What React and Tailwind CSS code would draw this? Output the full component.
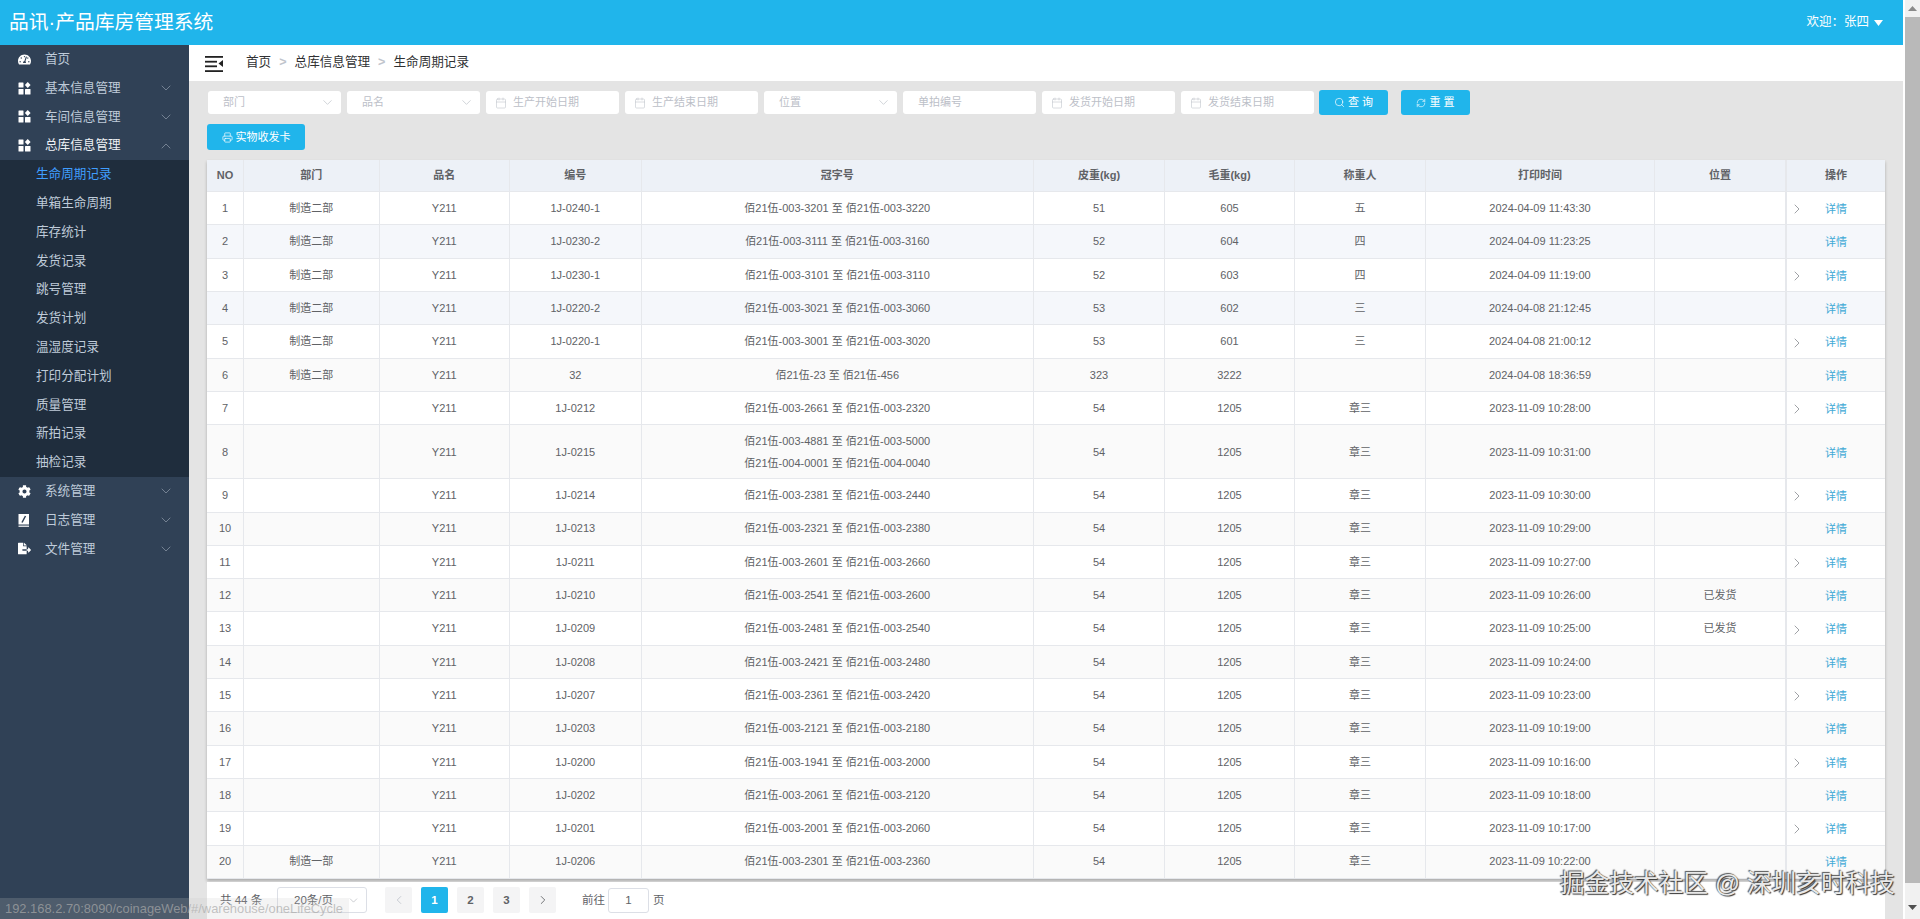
import React from "react";
import { FaTachometerAlt, FaCog, FaFileExport } from "react-icons/fa";
import { ChevronDown, ChevronUp, ChevronRight, ChevronLeft, Calendar, Search, RefreshCw, Printer } from "lucide-react";

const font = "font-['Liberation_Sans','Noto_Sans_CJK_SC',sans-serif]";

function Grid4() {
  return (
    <svg width="13" height="13" viewBox="0 0 13 13" fill="#fff">
      <rect x="0.5" y="0.5" width="5" height="5" rx="0.5" />
      <rect x="0.5" y="7" width="5" height="5.5" rx="0.5" />
      <rect x="7" y="7" width="5.5" height="5.5" rx="0.5" />
      <path d="M9.7 0 L12.6 3 L9.7 6 L6.9 3 Z" />
    </svg>
  );
}
function NoteIcon() {
  return (
    <svg width="13" height="13" viewBox="0 0 13 13">
      <rect x="0.5" y="0" width="10.5" height="10.5" fill="#fff" />
      <path d="M7.5 2 L4 8.5" stroke="#304156" strokeWidth="1.5" />
      <rect x="0.5" y="11.6" width="10.5" height="1.2" fill="#fff" />
    </svg>
  );
}

const menuTop = [
  { t: "基本信息管理", i: <Grid4 /> },
  { t: "车间信息管理", i: <Grid4 /> },
];
const subs = ["生命周期记录", "单箱生命周期", "库存统计", "发货记录", "跳号管理", "发货计划", "温湿度记录", "打印分配计划", "质量管理", "新拍记录", "抽检记录"];
const menuBottom = [
  { t: "系统管理", i: <FaCog size={13} color="#fff" /> },
  { t: "日志管理", i: <NoteIcon /> },
  { t: "文件管理", i: <FaFileExport size={13} color="#fff" /> },
];

function MenuRow({ icon, text, open, arrow = true, light }) {
  return (
    <div className={`h-[28.8px] flex items-center pl-[18px] pr-[15px] text-[12.6px] ${light ? "text-[#eef1f5]" : "text-[#bfcbd9]"}`}>
      <span className="w-[13px] flex justify-center">{icon}</span>
      <span className="ml-[14px] flex-1">{text}</span>
      {arrow && (open ? <ChevronUp size={16} strokeWidth={1.1} className="text-[#8d99a9]" /> : <ChevronDown size={16} strokeWidth={1.1} className="text-[#8d99a9]" />)}
    </div>
  );
}

function Sidebar() {
  return (
    <aside className="w-[189px] shrink-0 bg-[#304156] h-full">
      <MenuRow icon={<FaTachometerAlt size={13} color="#fff" />} text="首页" arrow={false} />
      {menuTop.map((m) => <MenuRow key={m.t} icon={m.i} text={m.t} />)}
      <MenuRow icon={<Grid4 />} text="总库信息管理" open light />
      <div className="bg-[#1f2d3d]">
        {subs.map((s, i) => (
          <div key={s} className={`h-[28.8px] flex items-center pl-[36px] text-[12.6px] ${i === 0 ? "text-[#409eff]" : "text-[#bfcbd9]"}`}>{s}</div>
        ))}
      </div>
      {menuBottom.map((m) => <MenuRow key={m.t} icon={m.i} text={m.t} />)}
    </aside>
  );
}

function Sel({ w, text }) {
  return (
    <div className={`${w} h-[23px] bg-white rounded-[3px] flex items-center justify-between pl-[15px] pr-[6px] text-[11px] text-[#bcc0c8]`}>
      <span>{text}</span>
      <ChevronDown size={15} strokeWidth={1.1} />
    </div>
  );
}
function DateBox({ text }) {
  return (
    <div className="w-[133px] h-[23px] bg-white rounded-[3px] flex items-center pl-[9px] text-[11px] text-[#bcc0c8]">
      <Calendar size={12} strokeWidth={1.1} />
      <span className="ml-[6px]">{text}</span>
    </div>
  );
}
function Btn({ icon, text, cls }) {
  return (
    <button className={`h-[25px] bg-[#20b5eb] rounded-[3px] text-white text-[11px] flex items-center justify-center gap-[3px] ${cls}`}>
      {icon}<span>{text}</span>
    </button>
  );
}

const r = (a, b) => `佰21伍-003-${a} 至 佰21伍-003-${b}`;
const rows = [
  ["制造二部", "1J-0240-1", r(3201, 3220), 51, 605, "五", "2024-04-09 11:43:30", ""],
  ["制造二部", "1J-0230-2", r(3111, 3160), 52, 604, "四", "2024-04-09 11:23:25", ""],
  ["制造二部", "1J-0230-1", r(3101, 3110), 52, 603, "四", "2024-04-09 11:19:00", ""],
  ["制造二部", "1J-0220-2", r(3021, 3060), 53, 602, "三", "2024-04-08 21:12:45", ""],
  ["制造二部", "1J-0220-1", r(3001, 3020), 53, 601, "三", "2024-04-08 21:00:12", ""],
  ["制造二部", "32", "佰21伍-23 至 佰21伍-456", 323, 3222, "", "2024-04-08 18:36:59", ""],
  ["", "1J-0212", r(2661, 2320), 54, 1205, "章三", "2023-11-09 10:28:00", ""],
  ["", "1J-0215", [r(4881, 5000), "佰21伍-004-0001 至 佰21伍-004-0040"], 54, 1205, "章三", "2023-11-09 10:31:00", ""],
  ["", "1J-0214", r(2381, 2440), 54, 1205, "章三", "2023-11-09 10:30:00", ""],
  ["", "1J-0213", r(2321, 2380), 54, 1205, "章三", "2023-11-09 10:29:00", ""],
  ["", "1J-0211", r(2601, 2660), 54, 1205, "章三", "2023-11-09 10:27:00", ""],
  ["", "1J-0210", r(2541, 2600), 54, 1205, "章三", "2023-11-09 10:26:00", "已发货"],
  ["", "1J-0209", r(2481, 2540), 54, 1205, "章三", "2023-11-09 10:25:00", "已发货"],
  ["", "1J-0208", r(2421, 2480), 54, 1205, "章三", "2023-11-09 10:24:00", ""],
  ["", "1J-0207", r(2361, 2420), 54, 1205, "章三", "2023-11-09 10:23:00", ""],
  ["", "1J-0203", r(2121, 2180), 54, 1205, "章三", "2023-11-09 10:19:00", ""],
  ["", "1J-0200", r(1941, 2000), 54, 1205, "章三", "2023-11-09 10:16:00", ""],
  ["", "1J-0202", r(2061, 2120), 54, 1205, "章三", "2023-11-09 10:18:00", ""],
  ["", "1J-0201", r(2001, 2060), 54, 1205, "章三", "2023-11-09 10:17:00", ""],
  ["制造一部", "1J-0206", r(2301, 2360), 54, 1205, "章三", "2023-11-09 10:22:00", ""],
];
const heads = ["NO", "部门", "品名", "编号", "冠字号", "皮重(kg)", "毛重(kg)", "称重人", "打印时间", "位置", "操作"];
const widths = ["w-[36.5px]", "w-[135.5px]", "w-[130.5px]", "w-[131.5px]", "w-[392.5px]", "w-[131px]", "w-[130px]", "w-[131px]", "w-[229px]", "w-[131.5px]", "w-[99px]"];

function DataTable() {
  const td = "border-r border-b border-[#e6e8ec] text-center p-0";
  return (
    <table className="w-[1678px] table-fixed border-collapse bg-white text-[11px] text-[#606266] shadow-[0_2px_3px_rgba(0,0,0,0.25)]">
      <colgroup>{widths.map((w, i) => <col key={i} className={w} />)}</colgroup>
      <thead>
        <tr className="h-[31.7px] bg-[#edf1f7]">
          {heads.map((h, i) => (
            <th key={h} className={`${td} font-bold text-[#606266] ${i === 9 ? "border-r-2" : ""} ${i === 10 ? "border-r-0" : ""}`}>{h}</th>
          ))}
        </tr>
      </thead>
      <tbody>
        {rows.map((d, i) => {
          const bg = i % 2 === 0 ? "bg-white" : i < 4 ? "bg-[#f5f7fb]" : "bg-[#fafafa]";
          return (
            <tr key={i} className={`${i === 7 ? "h-[54px]" : "h-[33.3px]"} ${bg}`}>
              <td className={td}>{i + 1}</td>
              <td className={td}>{d[0]}</td>
              <td className={td}>Y211</td>
              <td className={td}>{d[1]}</td>
              <td className={td}>
                {Array.isArray(d[2])
                  ? d[2].map((x) => <div key={x} className="leading-[22px]">{x}</div>)
                  : d[2]}
              </td>
              <td className={td}>{d[3]}</td>
              <td className={td}>{d[4]}</td>
              <td className={td}>{d[5]}</td>
              <td className={td}>{d[6]}</td>
              <td className={`${td} border-r-2`}>{d[7]}</td>
              <td className={`${td} border-r-0 relative`}>
                {i % 2 === 0 && <ChevronRight size={16} strokeWidth={1} className="absolute left-[1.5px] top-1/2 -translate-y-[7px] text-[#6f7379]" />}
                <span className="text-[#3fa9d6] relative top-[1px]">详情</span>
              </td>
            </tr>
          );
        })}
      </tbody>
    </table>
  );
}

function PageBtn({ children, active, disabled }) {
  return (
    <div className={`w-[27px] h-[26px] rounded-[2px] flex items-center justify-center text-[11.5px] font-bold ${active ? "bg-[#20b5eb] text-white" : "bg-[#f4f4f5] text-[#606266]"} ${disabled ? "text-[#c0c4cc]" : ""}`}>
      {children}
    </div>
  );
}

export default function App() {
  return (
    <div className={`${font} w-[1920px] h-[919px] overflow-hidden flex relative bg-white`}>
      <div className="w-[1905px] h-full flex flex-col">
        <header className="h-[45px] shrink-0 w-[1903px] bg-[#20b5eb] flex items-center justify-between pl-[9px] pr-[20px] text-white">
          <span className="text-[19.8px]">品讯·产品库房管理系统</span>
          <span className="flex items-center gap-[5px] text-[12.5px]">
            欢迎：张四
            <svg width="9" height="6" viewBox="0 0 9 6" fill="#fff"><path d="M0 0 H9 L4.5 6 Z" /></svg>
          </span>
        </header>
        <div className="flex-1 flex min-h-0">
          <Sidebar />
          <main className="w-[1714px] flex flex-col min-h-0">
            <div className="h-[36px] shrink-0 bg-white flex items-center pl-[16px] pb-[2px] text-[12.6px] text-[#303133]">
              <svg width="18" height="16" viewBox="0 0 18 16" fill="#222" className="mr-[23px] mt-[3px]">
                <rect x="0" y="0" width="18" height="1.8" />
                <rect x="0" y="4.8" width="12" height="1.8" />
                <rect x="0" y="9.4" width="12" height="1.8" />
                <rect x="0" y="14.2" width="18" height="1.8" />
                <path d="M18 4 V11 L13.5 7.5 Z" />
              </svg>
              <span>首页</span>
              <span className="mx-[8px] text-[#c0c4cc] font-bold">&gt;</span>
              <span>总库信息管理</span>
              <span className="mx-[8px] text-[#c0c4cc] font-bold">&gt;</span>
              <span>生命周期记录</span>
            </div>
            <div className="flex-1 bg-[#e4e4e4] pl-[18px] pt-[9px] min-h-0 flex flex-col">
              <div className="flex items-center h-[25px] ml-[1px]">
                <div className="flex gap-[6px]">
                  <Sel w="w-[133px]" text="部门" />
                  <Sel w="w-[133px]" text="品名" />
                  <DateBox text="生产开始日期" />
                  <DateBox text="生产结束日期" />
                  <Sel w="w-[133px]" text="位置" />
                  <div className="w-[133px] h-[23px] bg-white rounded-[3px] flex items-center pl-[15px] text-[11px] text-[#bcc0c8]">单拍编号</div>
                  <DateBox text="发货开始日期" />
                  <DateBox text="发货结束日期" />
                </div>
                <Btn cls="w-[69px] ml-[5px]" icon={<Search size={11} strokeWidth={1.5} />} text="查 询" />
                <Btn cls="w-[69px] ml-[13px]" icon={<RefreshCw size={10} strokeWidth={1.5} />} text="重 置" />
              </div>
              <Btn cls="w-[98px] h-[26px] mt-[9px]" icon={<Printer size={11} strokeWidth={1.5} />} text="实物收发卡" />
              <div className="mt-[10px] shrink-0"><DataTable /></div>
              <div className="w-[1678px] flex-1 mt-[3px] bg-white flex items-center pl-[13px] text-[11.5px] text-[#606266]">
                <span className="w-[57px]">共 44 条</span>
                <div className="w-[90px] h-[26px] border border-[#dcdfe6] rounded-[3px] flex items-center justify-between pl-[16px] pr-[6px]">
                  <span>20条/页</span>
                  <ChevronDown size={13} strokeWidth={1} className="text-[#a0a4ab]" />
                </div>
                <div className="flex gap-[9px] ml-[18px]">
                  <PageBtn disabled><ChevronLeft size={14} strokeWidth={1.5} /></PageBtn>
                  <PageBtn active>1</PageBtn>
                  <PageBtn>2</PageBtn>
                  <PageBtn>3</PageBtn>
                  <PageBtn><ChevronRight size={14} strokeWidth={1.5} /></PageBtn>
                </div>
                <span className="ml-[26px]">前往</span>
                <div className="w-[41px] h-[25px] ml-[3px] border border-[#dcdfe6] rounded-[3px] flex items-center justify-center">1</div>
                <span className="ml-[4px]">页</span>
              </div>
            </div>
          </main>
        </div>
      </div>
      <div className="w-[15px] h-full bg-[#f1f1f1] flex flex-col items-center">
        <svg width="9" height="5" viewBox="0 0 9 5" fill="#8a8a8a" className="mt-[6px] mb-[6px]"><path d="M4.5 0 L9 5 H0 Z" /></svg>
        <div className="w-[15px] h-[866px] bg-[#b9b9b9]" />
        <svg width="9" height="5" viewBox="0 0 9 5" fill="#505050" className="mt-[22px]"><path d="M0 0 H9 L4.5 5 Z" /></svg>
      </div>
      <div className="absolute left-0 bottom-0 w-[349px] h-[21px] bg-[rgba(200,200,200,0.2)] flex items-center pl-[5px] text-[12.9px] text-[rgba(170,170,170,0.7)]">
        192.168.2.70:8090/coinageWeb/#/warehouse/oneLifeCycle
      </div>
      <div className="absolute left-[1560px] top-[865px] text-[24.7px] text-[#e8e8e8] [text-shadow:1px_1px_1px_#333,-1px_-1px_1px_#555] whitespace-nowrap">
        掘金技术社区 @ 深圳亥时科技
      </div>
    </div>
  );
}
